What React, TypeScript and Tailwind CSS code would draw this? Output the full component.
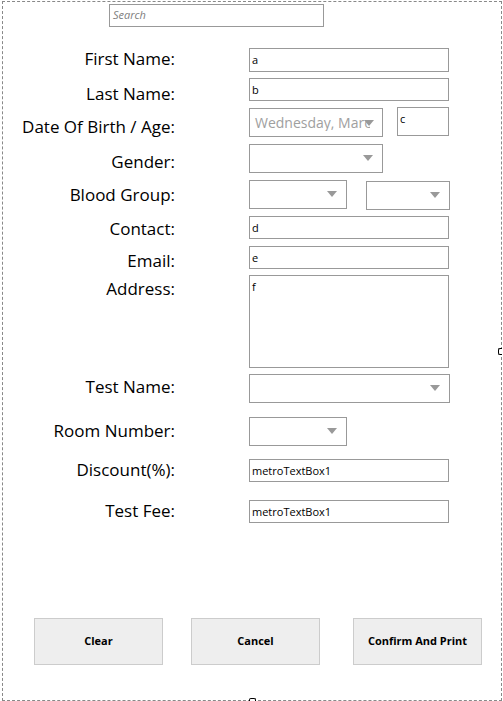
import React from 'react';

const font = { fontFamily: '"Open Sans", "Noto Sans", sans-serif' };

// little grey dropdown triangle
const Arrow = () => (
  <svg width="10" height="6" viewBox="0 0 10 6" className="shrink-0">
    <polygon points="0,0 10,0 5,6" fill="#999999" />
  </svg>
);

const TextBox = ({ value, className }: { value: string; className: string }) => (
  <div className={`border border-[#999999] bg-white pl-[2px] pt-[4px] text-[11px] leading-[13px] text-black ${className}`}>
    {value}
  </div>
);

const Combo = ({ className }: { className: string }) => (
  <div className={`flex items-center justify-end border border-[#999999] bg-white pr-[9px] pb-[1px] ${className}`}>
    <Arrow />
  </div>
);

const Label = ({ text, className }: { text: string; className: string }) => (
  <div className={`w-[172px] shrink-0 text-right text-[17px] leading-[17px] text-black ${className}`}>{text}</div>
);

const Btn = ({ text, className }: { text: string; className: string }) => (
  <button className={`flex h-[47px] w-[129px] items-center justify-center border border-[#cccccc] bg-[#eeeeee] text-[11px] font-bold text-black ${className}`}>
    {text}
  </button>
);

export default function App() {
  return (
    <div className="relative h-[701px] w-[503px] bg-white" style={font}>
      <div className="ml-[2px] mt-[1px] h-[700px] w-[500px] border border-dashed border-[#888888]">
        {/* search */}
        <div className="ml-[106px] mt-[2px] h-[23px] w-[215px] border border-[#999999] pl-[3px] pt-[3px] text-[11px] italic leading-[14px] text-[#808080]">
          Search
        </div>

        <div className="mt-[21px] flex h-[24px]">
          <Label text="First Name:" className="mt-[2px]" />
          <TextBox value="a" className="ml-[74px] h-[24px] w-[200px]" />
        </div>

        <div className="mt-[6px] flex h-[23px]">
          <Label text="Last Name:" className="mt-[7px]" />
          <TextBox value="b" className="ml-[74px] h-[23px] w-[200px]" />
        </div>

        <div className="mt-[6px] flex h-[30px]">
          <Label text="Date Of Birth / Age:" className="mt-[11px]" />
          <div className="relative ml-[74px] mt-[1px] h-[29px] w-[134px] overflow-hidden border border-[#999999] bg-white">
            <div className="w-[120px] overflow-hidden whitespace-nowrap pl-[5px] pt-[5px] text-[14px] leading-[17px] text-[#a0a0a0]">
              Wednesday, March 1, 2017
            </div>
            <div className="absolute right-[8px] top-[11px]">
              <Arrow />
            </div>
          </div>
          <TextBox value="c" className="ml-[14px] h-[29px] w-[52px] pt-[3px]" />
        </div>

        <div className="mt-[7px] flex h-[29px]">
          <Label text="Gender:" className="mt-[9px]" />
          <Combo className="ml-[74px] h-[29px] w-[134px]" />
        </div>

        <div className="mt-[7px] flex h-[30px]">
          <Label text="Blood Group:" className="mt-[6px]" />
          <Combo className="ml-[74px] h-[29px] w-[98px]" />
          <Combo className="ml-[19px] mt-[1px] h-[29px] w-[84px]" />
        </div>

        <div className="mt-[6px] flex h-[23px]">
          <Label text="Contact:" className="mt-[4px]" />
          <TextBox value="d" className="ml-[74px] h-[23px] w-[200px]" />
        </div>

        <div className="mt-[7px] flex h-[23px]">
          <Label text="Email:" className="mt-[6px]" />
          <TextBox value="e" className="ml-[74px] h-[23px] w-[200px]" />
        </div>

        <div className="mt-[6px] flex h-[93px]">
          <Label text="Address:" className="mt-[5px]" />
          <TextBox value="f" className="ml-[74px] h-[93px] w-[200px] pt-[2px]" />
        </div>

        <div className="mt-[6px] flex h-[29px]">
          <Label text="Test Name:" className="mt-[4px]" />
          <Combo className="ml-[74px] h-[29px] w-[201px]" />
        </div>

        <div className="mt-[14px] flex h-[29px]">
          <Label text="Room Number:" className="mt-[5px]" />
          <Combo className="ml-[74px] h-[29px] w-[98px]" />
        </div>

        <div className="mt-[13px] flex h-[23px]">
          <Label text="Discount(%):" className="mt-[2px]" />
          <TextBox value="metroTextBox1" className="ml-[74px] h-[23px] w-[200px]" />
        </div>

        <div className="mt-[18px] flex h-[23px]">
          <Label text="Test Fee:" className="mt-[2px]" />
          <TextBox value="metroTextBox1" className="ml-[74px] h-[23px] w-[200px]" />
        </div>

        <div className="mt-[95px] flex">
          <Btn text="Clear" className="ml-[31px]" />
          <Btn text="Cancel" className="ml-[28px]" />
          <Btn text="Confirm And Print" className="ml-[33px]" />
        </div>
      </div>

      {/* designer resize handles */}
      <div className="absolute left-[498px] top-[347px] h-[7px] w-[4px] rounded-l-[2px] border border-r-0 border-black bg-white" />
      <div className="absolute left-[249px] top-[697px] h-[4px] w-[7px] rounded-t-[2px] border border-b-0 border-black bg-white" />
    </div>
  );
}
